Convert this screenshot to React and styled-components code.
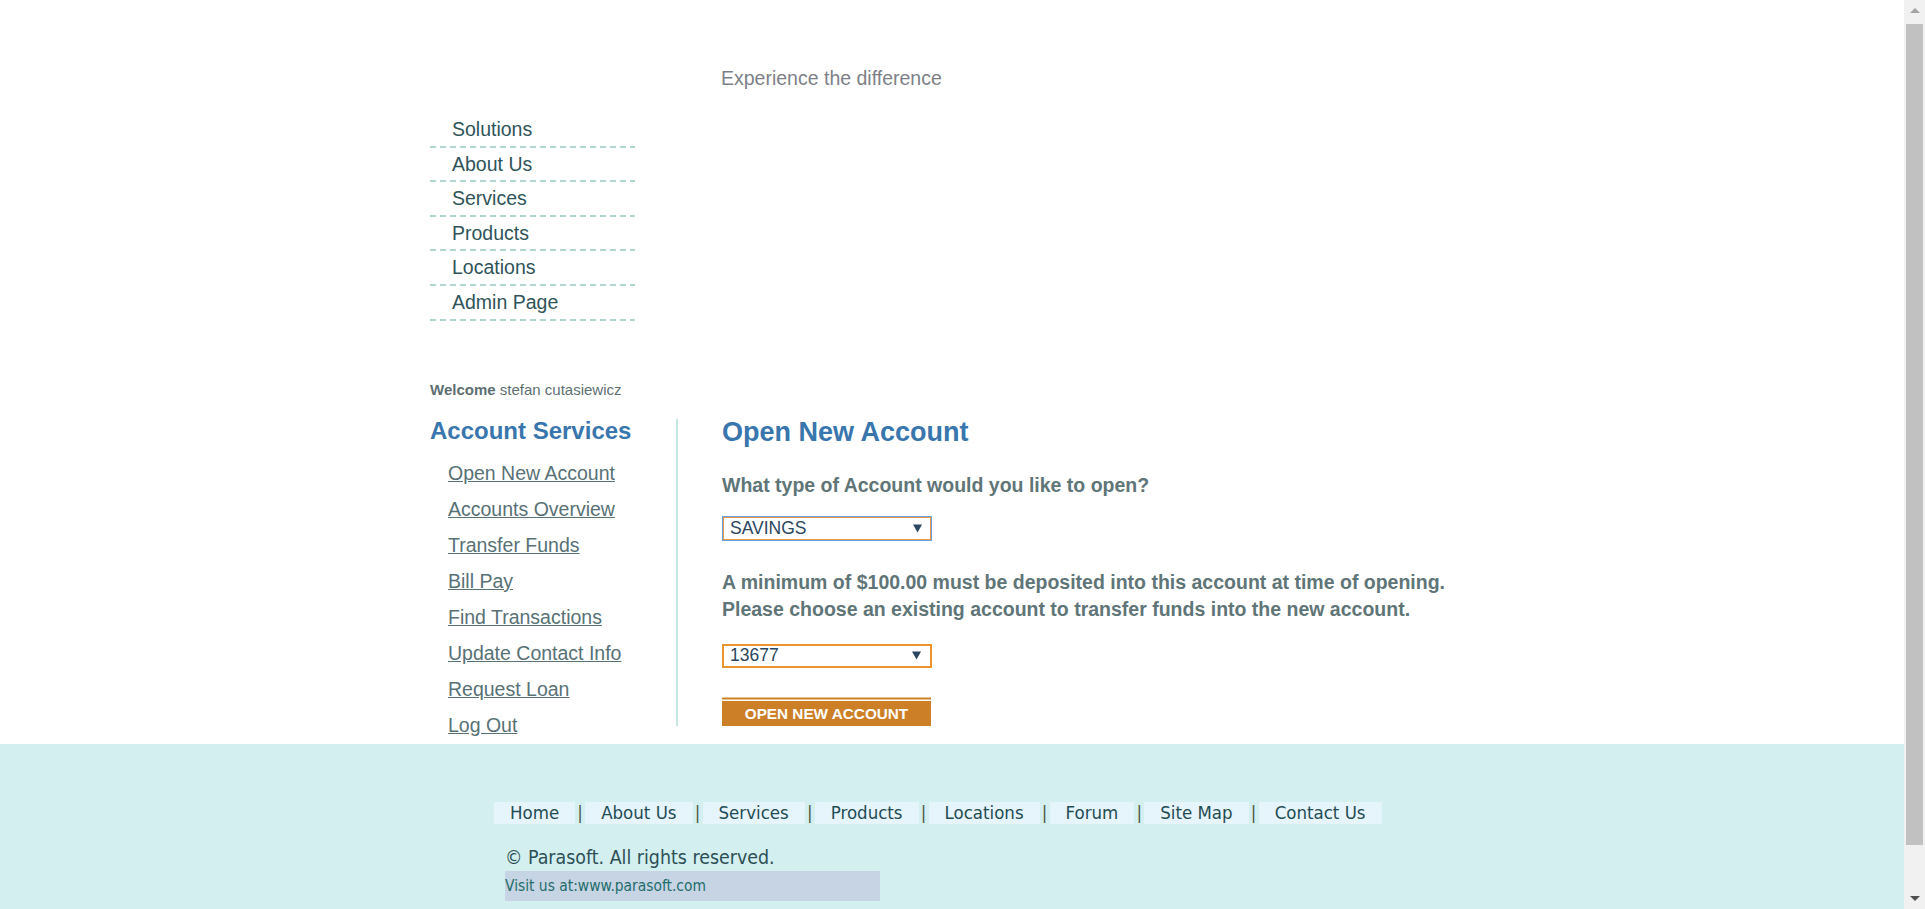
import React from 'react';
import styled, { createGlobalStyle } from 'styled-components';

const SCROLLBAR = 21;

const GlobalStyle = createGlobalStyle`
  html, body { margin: 0; padding: 0; background: #fff; }
  body {
    font-family: "Liberation Sans", Arial, Helvetica, sans-serif;
    padding-right: ${SCROLLBAR}px;
  }
  *, *::before, *::after { box-sizing: border-box; }
`;

const Page = styled.div`
  width: 1044px;
  margin: 0 auto;
`;

const Header = styled.header`
  height: 90px;
  padding: 67px 0 0 291px;
`;

const Caption = styled.p`
  margin: 0;
  font-size: 19.5px;
  line-height: 23px;
  color: #7d8187;
`;

const TopNav = styled.ul`
  list-style: none;
  margin: 23px 0 0;
  padding: 0;
  width: 205px;
`;

const TopNavItem = styled.li`
  height: 34.6px;
  padding: 0 0 2px 22px;
  line-height: 32.6px;
  font-size: 19.5px;
  color: #30545a;
  background: repeating-linear-gradient(to right, #b1d5d1 0 6px, transparent 6px 10px) left bottom / 100% 2px no-repeat;
`;

const Welcome = styled.p`
  margin: 60.5px 0 0;
  font-size: 15px;
  line-height: 18px;
  color: #5d6f72;
  b { font-weight: bold; }
`;

const Columns = styled.div`
  display: flex;
  align-items: flex-start;
  margin-top: 18px;
`;

const LeftPanel = styled.aside`
  width: 246px;
  flex: none;
`;

const PanelTitle = styled.h2`
  margin: 0;
  font-size: 24px;
  line-height: 28px;
  font-weight: bold;
  color: #3876ad;
`;

const ServiceList = styled.ul`
  list-style: none;
  margin: 11px 0 0;
  padding: 0 0 0 18px;
`;

const ServiceItem = styled.li`
  font-size: 19.5px;
  line-height: 35.93px;
  a {
    color: #587176;
    text-decoration: underline;
  }
`;

const RightPanel = styled.main`
  flex: 1;
  margin-top: 2px;
  border-left: 2px solid #c6e8e2;
  padding-left: 44px;
`;

const Title = styled.h1`
  margin: 0;
  font-size: 27px;
  line-height: 26px;
  font-weight: bold;
  color: #3876ad;
`;

const Question = styled.p`
  margin: ${(p) => p.$top}px 0 0;
  font-size: 19.5px;
  line-height: ${(p) => p.$lh}px;
  font-weight: bold;
  color: #5f7577;
  white-space: nowrap;
`;

const SelectBox = styled.div`
  margin-top: ${(p) => p.$top}px;
  width: 210px;
  height: ${(p) => (p.$focused ? 25 : 24)}px;
  display: flex;
  align-items: center;
  justify-content: space-between;
  padding: 0 9px 0 ${(p) => (p.$focused ? 7 : 6)}px;
  border: ${(p) => (p.$focused ? '1px solid #6a9ee2' : '2px solid #ec9530')};
  box-shadow: ${(p) => (p.$focused ? 'inset 0 0 0 1px #eb9a3e' : 'none')};
  font-size: 17.5px;
  color: #2b4660;
  background: #fff;
`;

const Arrow = styled.svg`
  width: ${(p) => p.$w}px;
  height: ${(p) => p.$h}px;
  display: block;
`;

const SubmitButton = styled.button`
  display: block;
  margin-top: 33.5px;
  width: 209px;
  height: 25px;
  padding: 0;
  border: none;
  background: #cc7f26;
  color: #fff;
  font-family: "Liberation Sans", Arial, sans-serif;
  font-size: 15.3px;
  font-weight: bold;
  line-height: 25px;
  text-transform: uppercase;
  box-shadow: 0 -1.5px 0 #fff, 0 -3.5px 0 #cc7f26;
  cursor: pointer;
`;

const Footer = styled.footer`
  background: #d3eff0;
  padding: 58.5px 0 68px;
  font-family: "DejaVu Sans Condensed", "DejaVu Sans", sans-serif;
`;

const FooterInner = styled.div`
  width: 1044px;
  margin: 0 auto;
`;

const FooterLinks = styled.ul`
  list-style: none;
  margin: 0;
  padding: 0 0 0 64px;
  display: flex;
  align-items: center;
`;

const FooterLink = styled.li`
  height: 22px;
  padding: 0 16px;
  line-height: 22px;
  font-size: 18.5px;
  color: #1f4d55;
  background: #e6f4fb;
`;

const Separator = styled.li`
  width: 10px;
  text-align: center;
  font-size: 18.5px;
  line-height: 22px;
  color: #4d5a46;
`;

const Copyright = styled.p`
  margin: 23px 0 0 75px;
  font-size: 19.4px;
  line-height: 22px;
  color: #2d4f55;
`;

const Visit = styled.p`
  margin: 1.5px 0 0 75px;
  width: 375px;
  height: 30px;
  font-size: 15.4px;
  line-height: 30px;
  color: #236d6b;
  background: #c6d4e3;
`;

/* window scrollbar, drawn over the right edge of the viewport */
const ScrollTrack = styled.div`
  position: fixed;
  top: 0;
  right: 0;
  width: ${SCROLLBAR}px;
  height: 100vh;
  display: flex;
  flex-direction: column;
  background: #f1f1f1;
`;

const ScrollButton = styled.div`
  flex: none;
  height: 21px;
  display: flex;
  align-items: center;
  justify-content: center;
  margin-top: ${(p) => (p.$end ? 'auto' : '0')};
`;

const ScrollThumb = styled.div`
  flex: none;
  height: 821px;
  margin: 3px 2px 0;
  background: #c1c1c1;
`;

const DownArrow = () => (
  <Arrow $w={9} $h={9} viewBox="0 0 9 9" aria-hidden="true">
    <polygon points="0,0.5 9,0.5 4.5,8.5" fill="#2b4660" />
  </Arrow>
);

const topNav = ['Solutions', 'About Us', 'Services', 'Products', 'Locations', 'Admin Page'];
const services = [
  'Open New Account',
  'Accounts Overview',
  'Transfer Funds',
  'Bill Pay',
  'Find Transactions',
  'Update Contact Info',
  'Request Loan',
  'Log Out',
];
const footerLinks = ['Home', 'About Us', 'Services', 'Products', 'Locations', 'Forum', 'Site Map', 'Contact Us'];

export default function App() {
  return (
    <>
      <GlobalStyle />
      <Page>
        <Header>
          <Caption>Experience the difference</Caption>
        </Header>
        <TopNav>
          {topNav.map((t) => (
            <TopNavItem key={t}>{t}</TopNavItem>
          ))}
        </TopNav>
        <Welcome>
          <b>Welcome</b> stefan cutasiewicz
        </Welcome>
        <Columns>
          <LeftPanel>
            <PanelTitle>Account Services</PanelTitle>
            <ServiceList>
              {services.map((s) => (
                <ServiceItem key={s}>
                  <a href="#">{s}</a>
                </ServiceItem>
              ))}
            </ServiceList>
          </LeftPanel>
          <RightPanel>
            <Title>Open New Account</Title>
            <Question $top={28} $lh={24}>What type of Account would you like to open?</Question>
            <SelectBox $top={19} $focused>
              <span>SAVINGS</span>
              <DownArrow />
            </SelectBox>
            <Question $top={28} $lh={27}>
              A minimum of $100.00 must be deposited into this account at time of opening.
              <br />
              Please choose an existing account to transfer funds into the new account.
            </Question>
            <SelectBox $top={20.5}>
              <span>13677</span>
              <DownArrow />
            </SelectBox>
            <SubmitButton type="button">Open New Account</SubmitButton>
          </RightPanel>
        </Columns>
      </Page>
      <Footer>
        <FooterInner>
          <FooterLinks>
            {footerLinks.map((l, i) => (
              <React.Fragment key={l}>
                {i > 0 && <Separator aria-hidden="true">|</Separator>}
                <FooterLink>{l}</FooterLink>
              </React.Fragment>
            ))}
          </FooterLinks>
          <Copyright>© Parasoft. All rights reserved.</Copyright>
          <Visit>Visit us at:www.parasoft.com</Visit>
        </FooterInner>
      </Footer>
      <ScrollTrack aria-hidden="true">
        <ScrollButton>
          <Arrow $w={10} $h={5} viewBox="0 0 10 5">
            <polygon points="5,0 10,5 0,5" fill="#a3a3a3" />
          </Arrow>
        </ScrollButton>
        <ScrollThumb />
        <ScrollButton $end>
          <Arrow $w={10} $h={5} viewBox="0 0 10 5">
            <polygon points="0,0 10,0 5,5" fill="#505050" />
          </Arrow>
        </ScrollButton>
      </ScrollTrack>
    </>
  );
}
